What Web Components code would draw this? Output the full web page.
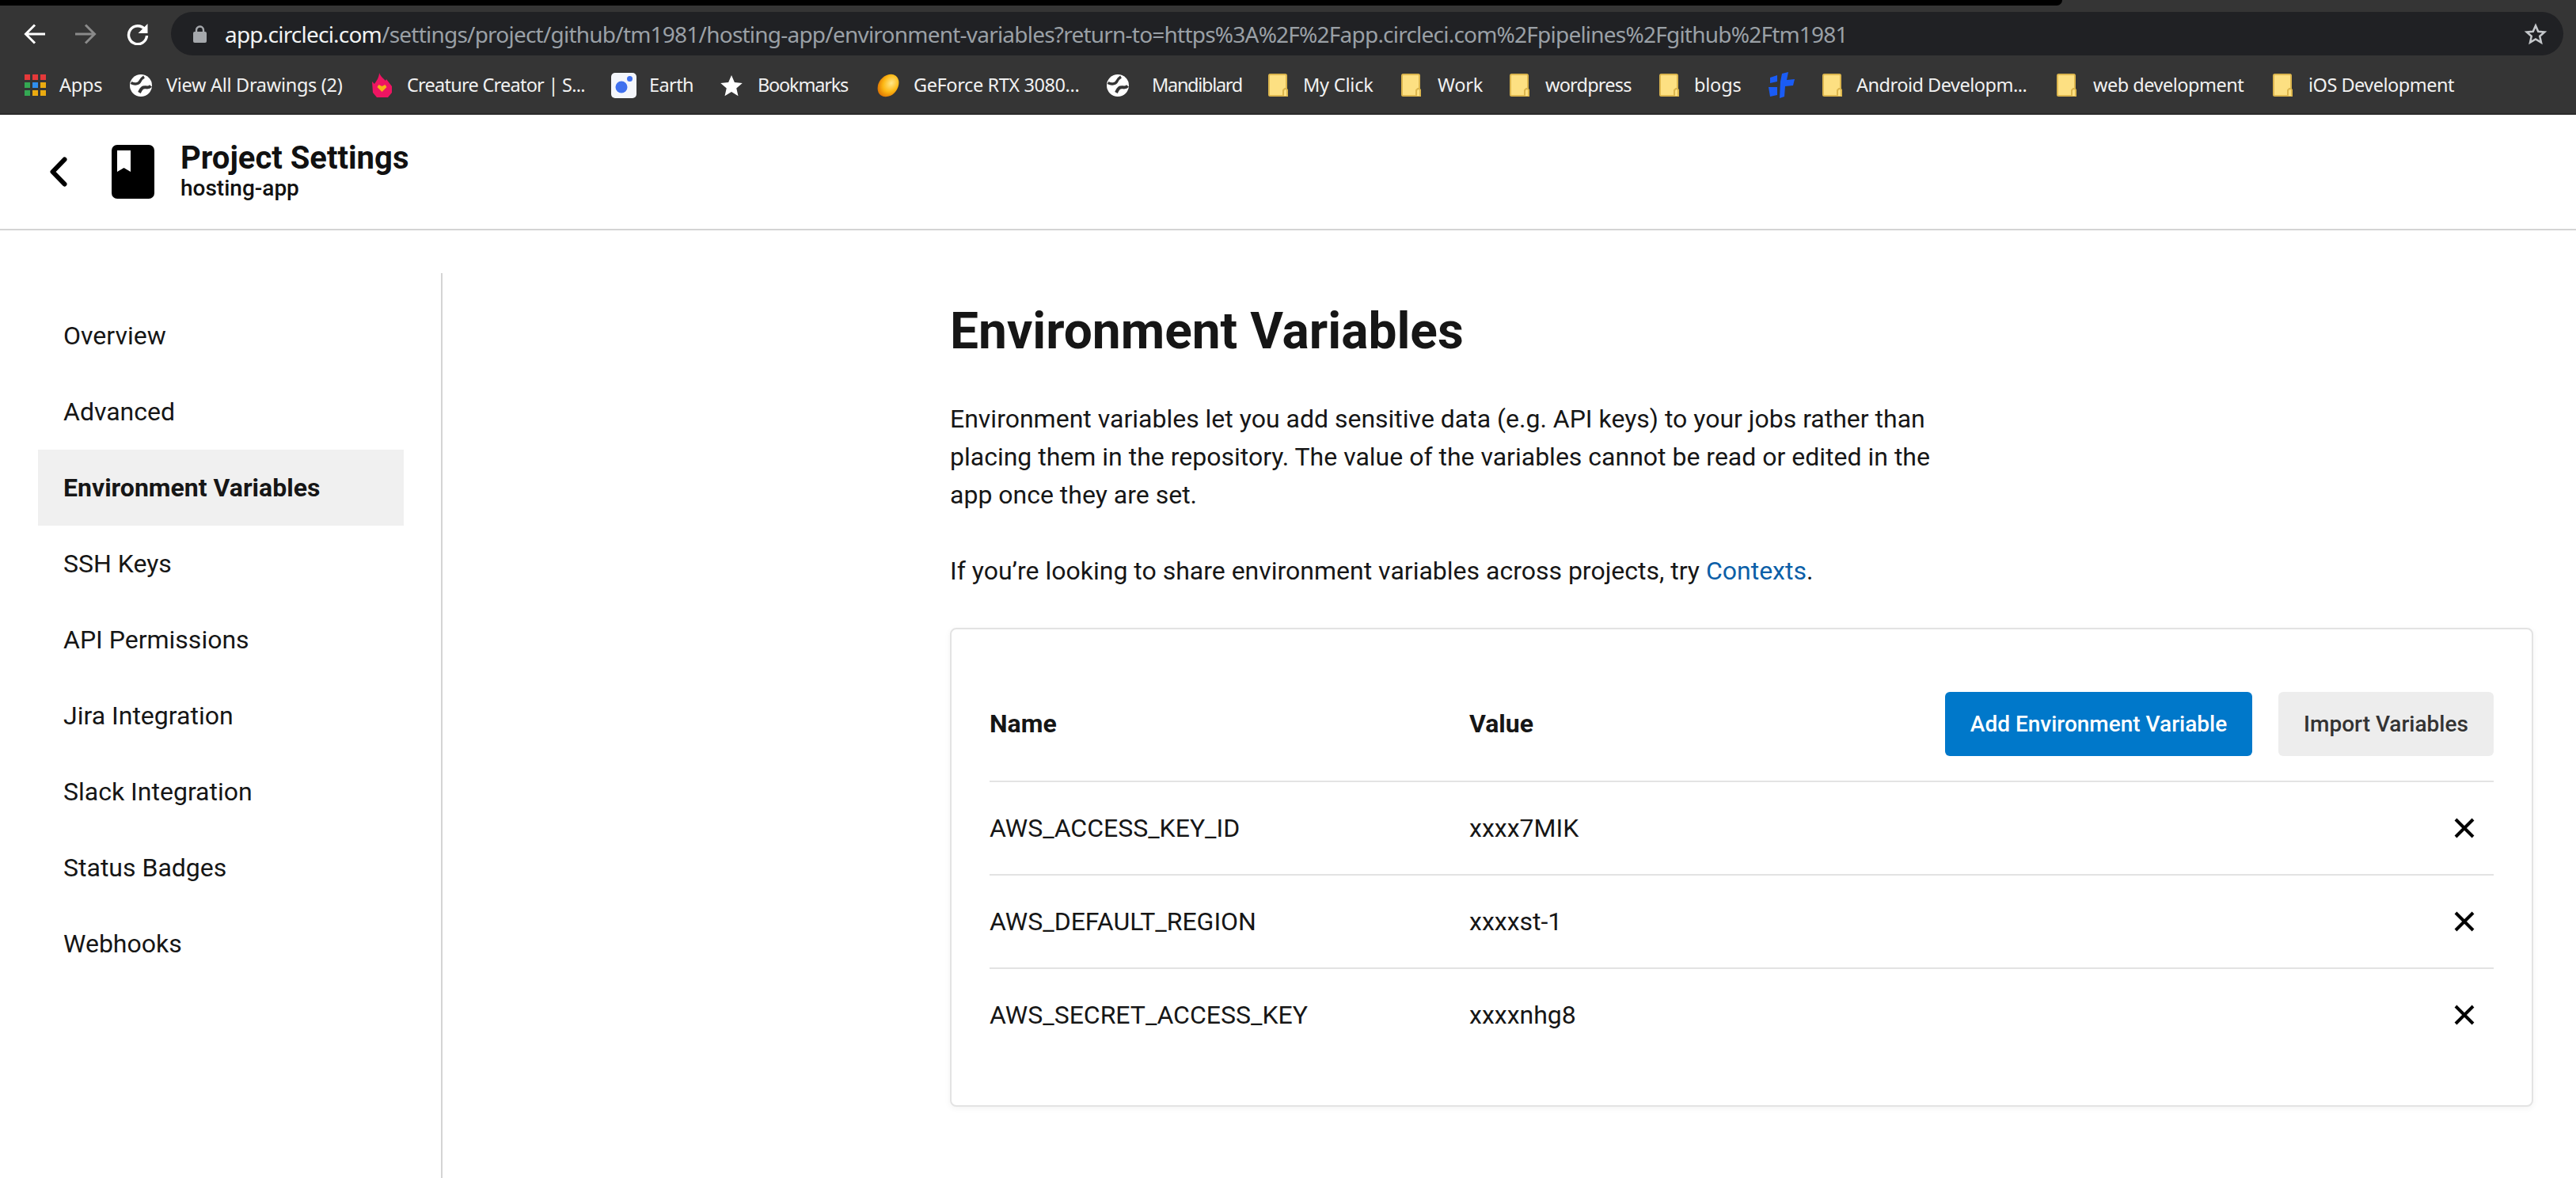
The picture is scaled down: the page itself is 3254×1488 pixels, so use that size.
<!DOCTYPE html>
<html lang="en">
<head>
<meta charset="utf-8">
<title>Environment Variables</title>
<style>
  html, body { margin: 0; padding: 0; background: #fff; }
  body { width: 3254px; height: 1488px; overflow: hidden; font-family: Roboto, sans-serif; color: #161616; }
</style>
</head>
<body>
<browser-toolbar>
  <book-mark style="--w:133px;--o:44px"><svg slot="icon" width="27" height="27" viewBox="0 0 27 27"><rect x="0" y="0" width="7" height="7" fill="#e5393a"/><rect x="10" y="0" width="7" height="7" fill="#e5393a"/><rect x="20" y="0" width="7" height="7" fill="#e5393a"/><rect x="0" y="10" width="7" height="7" fill="#34a853"/><rect x="10" y="10" width="7" height="7" fill="#2f8ff0"/><rect x="20" y="10" width="7" height="7" fill="#eaaa10"/><rect x="0" y="20" width="7" height="7" fill="#34a853"/><rect x="10" y="20" width="7" height="7" fill="#eaaa10"/><rect x="20" y="20" width="7" height="7" fill="#eaaa10"/></svg>Apps</book-mark>
  <book-mark style="--w:306px;--o:46px;--ls:-.3px"><globe-icon slot="icon"></globe-icon>View All Drawings (2)</book-mark>
  <book-mark style="--w:302px;--o:44px;--ls:-.75px"><svg slot="icon" width="25" height="32" viewBox="0 0 25 32"><path d="M9 0c1 3 3 5 6 8l2 2 1-2 7 9v8l-5 6H6l-5-6-1-14 3 3c2-3 6-8 6-14z" fill="#ee1562"/><path d="M12.500 24l-6-6 2-3 4 2 4-2 2 3z" fill="#f5b316"/></svg>Creature Creator | S...</book-mark>
  <book-mark style="--w:137px;--o:48px;--ls:-.6px"><svg slot="icon" width="32" height="32" viewBox="0 0 32 32"><rect width="32" height="32" rx="5" fill="#f4f6fb"/><circle cx="13" cy="18" r="7.500" fill="#3f70ee"/><circle cx="23.500" cy="7.500" r="3.500" fill="#3f70ee"/></svg>Earth</book-mark>
  <book-mark style="--w:198px;--o:48px;--ls:-1.2px"><svg slot="icon" width="30" height="30" viewBox="0 0 24 24"><path d="M12 1.500l3.100 7.300 7.900.7-6 5.200 1.800 7.800L12 18.300l-6.800 4.200L7 14.700 1 9.500l7.900-.7z" fill="#fff"/></svg>Bookmarks</book-mark>
  <book-mark style="--w:291px;--o:47px;--ls:-.4px"><svg slot="icon" width="30" height="30" viewBox="0 0 30 30"><defs><radialGradient id="orb" cx=".55" cy=".35" r=".7"><stop offset="0" stop-color="#ffe88a"/><stop offset=".55" stop-color="#fdb813"/><stop offset="1" stop-color="#d86a00"/></radialGradient></defs><ellipse cx="15" cy="15" rx="12" ry="15.500" transform="rotate(38 15 15)" fill="url(#orb)"/></svg>GeForce RTX 3080...</book-mark>
  <book-mark style="--w:204px;--o:57px;--ls:-1.3px"><globe-icon slot="icon"></globe-icon>Mandiblard</book-mark>
  <book-mark style="--w:168px;--o:44px"><folder-icon slot="icon"></folder-icon>My Click</book-mark>
  <book-mark style="--w:137px;--o:46px"><folder-icon slot="icon"></folder-icon>Work</book-mark>
  <book-mark style="--w:189px;--o:45px;--ls:-.8px"><folder-icon slot="icon"></folder-icon>wordpress</book-mark>
  <book-mark style="--w:137px;--o:44px"><folder-icon slot="icon"></folder-icon>blogs</book-mark>
  <book-mark style="--w:69px;--o:69px"><svg slot="icon" width="34" height="33" viewBox="0 0 34 33"><path d="M3 7l9-3v8l-9 2zM1 19h11v10l-9 2zM16 12l2-10 8-2-2 10 10-1-2 8-10 1-1 13-6 2z" fill="#1a5cf5"/></svg></book-mark>
  <book-mark style="--w:296px;--o:43px;--ls:-.5px"><folder-icon slot="icon"></folder-icon>Android Developm...</book-mark>
  <book-mark style="--w:273px;--o:46px;--ls:-.5px"><folder-icon slot="icon"></folder-icon>web development</book-mark>
  <book-mark style="--w:300px;--o:45px;--ls:-.5px"><folder-icon slot="icon"></folder-icon>iOS Development</book-mark>
</browser-toolbar>
<project-header title-text="Project Settings" sub-text="hosting-app"></project-header>
<settings-layout>
  <side-nav slot="nav">
    <nav-item>Overview</nav-item>
    <nav-item>Advanced</nav-item>
    <nav-item active>Environment Variables</nav-item>
    <nav-item>SSH Keys</nav-item>
    <nav-item>API Permissions</nav-item>
    <nav-item>Jira Integration</nav-item>
    <nav-item>Slack Integration</nav-item>
    <nav-item>Status Badges</nav-item>
    <nav-item>Webhooks</nav-item>
  </side-nav>
  <env-intro>
    <span slot="title">Environment Variables</span>
    <p>Environment variables let you add sensitive data (e.g. API keys) to your jobs rather than placing them in the repository. The value of the variables cannot be read or edited in the app once they are set.</p>
    <p>If you’re looking to share environment variables across projects, try <a href="#" style="color:#0b5fa8;text-decoration:none">Contexts</a>.</p>
  </env-intro>
  <env-card>
    <env-row name="AWS_ACCESS_KEY_ID" value="xxxx7MIK"></env-row>
    <env-row name="AWS_DEFAULT_REGION" value="xxxxst-1"></env-row>
    <env-row name="AWS_SECRET_ACCESS_KEY" value="xxxxnhg8"></env-row>
  </env-card>
</settings-layout>

<script>
// small helper so each component just declares its html + css
function component(tag, css, html) {
  customElements.define(tag, class extends HTMLElement {
    constructor() {
      super();
      this.attachShadow({ mode: 'open' });
    }
    connectedCallback() {
      const body = typeof html === 'function' ? html(this) : html;
      this.shadowRoot.innerHTML = `<style>${css}</style>${body}`;
    }
  });
}

component('globe-icon', ':host{display:block;width:28px;height:28px}', `
  <svg width="28" height="28" viewBox="0 0 28 28" style="display:block">
    <circle cx="14" cy="14" r="14" fill="#fff"/>
    <path d="M1.500 10.500C6 13 11 12.500 13 8.500c1-2 2.500-4 5-5.500" fill="none" stroke="#353535" stroke-width="3.400"/>
    <path d="M26.500 14.500c-3 3.500-6 1-9.500 2-3 1-3.500 4-5 6.500" fill="none" stroke="#353535" stroke-width="4"/>
  </svg>`);

component('folder-icon', ':host{display:block;width:25px;height:29px}', `
  <svg width="25" height="29" viewBox="0 0 25 29" style="display:block">
    <path d="M1 2.500C1 1.500 1.500 1 2.500 1h19c1 0 1.500.5 1.500 1.500V20l1 1v7H2.500C1.500 28 1 27.500 1 26.500z" fill="#fde082" stroke="#dcb64e" stroke-width="2"/>
    <path d="M19 28v-7l2-2h2l1 2v7" fill="#fde082" stroke="#dcb64e" stroke-width="2"/>
  </svg>`);

component('book-mark', `
  :host{display:flex;flex:none;align-items:center;height:71px;width:var(--w)}
  .i{display:flex;align-items:center;flex:none;width:var(--o)}
  .t{white-space:nowrap;font:23.500px/71px "Noto Sans",sans-serif;color:#f1f1f1;letter-spacing:var(--ls,-.2px)}
`, `<span class="i"><slot name="icon"></slot></span><span class="t"><slot></slot></span>`);

component('browser-toolbar', `
  :host{display:block;height:145px;background:#353535;box-sizing:border-box;border-bottom:2px solid #2b2b2b}
  .top{height:7px;width:2605px;background:#000;border-bottom-right-radius:8px}
  .nav{display:flex;align-items:center;height:55px;margin-top:8px;padding-right:16px}
  .btns{display:flex;width:216px;flex:none;align-items:center}
  .addr{flex:1;height:55px;background:#202124;border-radius:28px;display:flex;align-items:center;padding:0 20px 0 28px;box-sizing:border-box}
  .url{margin-left:23px;font:28px "Noto Sans",sans-serif;color:#9aa0a6;white-space:nowrap;flex:1;letter-spacing:-.78px}
  .url b{font-weight:400;color:#f1f3f4}
  .marks{display:flex;height:71px;margin-top:2px;padding-left:31px}
  svg{display:block;flex:none}
`, `
  <div class="top"></div>
  <div class="nav">
    <div class="btns">
      <svg style="margin-left:30px" width="28" height="26" viewBox="0 0 28 26" fill="none" stroke="#fff" stroke-width="3"><path d="M27 13H3M14 1.500L2.500 13 14 24.500"/></svg>
      <svg style="margin-left:36px" width="28" height="26" viewBox="0 0 28 26" fill="none" stroke="#8a8a8a" stroke-width="3"><path d="M1 13h24M14 1.500L25.500 13 14 24.500"/></svg>
      <svg style="margin-left:37px" width="30" height="28" viewBox="0 0 30 28"><path d="M24 8a11.500 11.500 0 1 0 2.500 8" fill="none" stroke="#fff" stroke-width="3.400"/><path d="M27.500 1v12h-12z" fill="#fff"/></svg>
    </div>
    <div class="addr">
      <svg width="17" height="22" viewBox="0 0 17 22"><path d="M4 9V6a4.500 4.500 0 0 1 9 0v3" fill="none" stroke="#a5a8ac" stroke-width="2.400"/><rect y="8" width="17" height="14" rx="2" fill="#a5a8ac"/></svg>
      <span class="url"><b>app.circleci.com</b>/settings/project/github/tm1981/hosting-app/environment-variables?return-to=https%3A%2F%2Fapp.circleci.com%2Fpipelines%2Fgithub%2Ftm1981</span>
      <svg width="30" height="30" viewBox="0 0 24 24" fill="none" stroke="#c4c7ca" stroke-width="2"><path d="M12 3.500l2.600 5.900 6.400.6-4.800 4.200 1.400 6.300L12 17.200l-5.600 3.300 1.400-6.300L3 10l6.400-.6z"/></svg>
    </div>
  </div>
  <div class="marks"><slot></slot></div>`);

component('project-header', `
  :host{display:flex;align-items:center;height:146px;box-sizing:border-box;border-bottom:2px solid #d4d4d4;background:#fff}
  svg{display:block;flex:none}
  .txt{margin:-5px 0 0 33px;display:flex;flex-direction:column}
  .t{font:700 40px/48px Roboto,sans-serif;color:#111}
  .s{font:500 28px/32px Roboto,sans-serif;color:#111;margin-top:-2px}
`, (el) => `
  <svg style="margin-left:63px" width="22" height="38" viewBox="0 0 22 38" fill="none" stroke="#000" stroke-width="6" stroke-linecap="round" stroke-linejoin="round"><path d="M18.500 3.500L3.500 19l15 15.500"/></svg>
  <svg style="margin-left:56px" width="54" height="68" viewBox="0 0 54 68"><path d="M7 0h40a7 7 0 0 1 7 7v54a7 7 0 0 1-7 7H7a7 7 0 0 1-7-7V7a7 7 0 0 1 7-7z" fill="#000"/><path d="M7 7h17v27l-8.500-5L7 34z" fill="#fff"/></svg>
  <div class="txt"><span class="t">${el.getAttribute('title-text')}</span><span class="s">${el.getAttribute('sub-text')}</span></div>`);

component('settings-layout', `
  :host{display:grid;grid-template-columns:559px 1fr;background:#fff}
  .nav{border-right:2px solid #d4d4d4;margin-top:54px;height:1143px;box-sizing:border-box}
  .main{padding:0 54px 0 641px}
`, `<div class="nav"><slot name="nav"></slot></div><div class="main"><slot></slot></div>`);

component('side-nav', ':host{display:flex;flex-direction:column;padding:31px 48px 0;width:462px}', '<slot></slot>');

component('nav-item', `
  :host{display:flex;align-items:center;height:96px;padding-left:32px;font:400 32px Roboto,sans-serif;color:#161616}
  :host([active]){background:#f0f0f0;font-weight:700}
`, '<slot></slot>');

component('env-intro', `
  :host{display:block}
  h1{margin:0;padding-top:90px;font:700 64px/76px Roboto,sans-serif;color:#161616}
  .body{margin-top:48px;width:1260px;font:400 32px/48px Roboto,sans-serif;color:#161616}
  ::slotted(p){margin:0 0 48px}
`, `<h1><slot name="title"></slot></h1><div class="body"><slot></slot></div>`);

component('env-card', `
  :host{display:block;box-sizing:border-box;width:2000px;height:605px;padding:0 48px;border:2px solid #e3e3e3;border-radius:8px;background:#fff;box-shadow:0 2px 8px rgba(0,0,0,.05)}
  .head{display:flex;align-items:center;height:191px;padding-top:47px;box-sizing:border-box;font:700 32px Roboto,sans-serif;color:#161616}
  .n{width:606px}
  .v{flex:1}
  button{height:81px;border:0;border-radius:6px;font:500 28px Roboto,sans-serif;padding:0;white-space:nowrap;flex:none}
  .add{background:#0078ca;color:#fff;width:388px}
  .imp{background:#ededed;color:#333;margin-left:33px;width:272px}
`, `
  <div class="head"><span class="n">Name</span><span class="v">Value</span>
    <button class="add">Add Environment Variable</button><button class="imp">Import Variables</button></div>
  <slot></slot>`);

component('env-row', `
  :host{display:flex;align-items:center;height:118px;box-sizing:border-box;border-top:2px solid #e3e3e3;font:400 32px Roboto,sans-serif;color:#161616}
  .n{width:606px}
  .v{flex:1}
  svg{display:block;margin-right:24px}
`, (el) => `
  <span class="n">${el.getAttribute('name')}</span><span class="v">${el.getAttribute('value')}</span>
  <svg width="26" height="26" viewBox="0 0 26 26" fill="none" stroke="#000" stroke-width="4"><path d="M2 2l22 22M24 2L2 24"/></svg>`);
</script>
</body>
</html>
